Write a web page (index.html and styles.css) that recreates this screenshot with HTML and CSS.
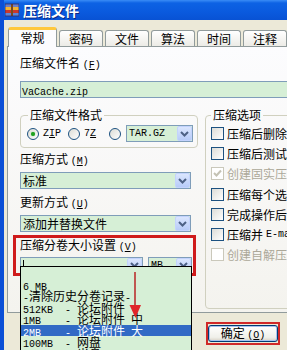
FILE: index.html
```html
<!DOCTYPE html>
<html lang="zh-CN">
<head>
    <meta charset="UTF-8">
    <title>压缩文件</title>
    <link rel="stylesheet" href="styles.css">
</head>
<body>
<div class="window">
    <div class="titlebar">
        <svg class="app-icon" width="14" height="14" viewBox="0 0 14 14">
            <rect x="0" y="1" width="14" height="3" fill="#6f7fc6"/>
            <rect x="0" y="4" width="14" height="3" fill="#f2b233"/>
            <rect x="0" y="7" width="14" height="3" fill="#c9392c"/>
            <rect x="0" y="10" width="14" height="3" fill="#5e86d6"/>
            <rect x="6" y="1" width="2" height="12" fill="#7a4a1e"/>
            <rect x="0" y="1" width="14" height="12" fill="none" stroke="#3a2a5a" stroke-width="0.8"/>
        </svg>
        <span class="title">压缩文件</span>
    </div>

    <div class="tabs">
        <div class="tab active">常规</div>
        <div class="tab">密码</div>
        <div class="tab">文件</div>
        <div class="tab">算法</div>
        <div class="tab">时间</div>
        <div class="tab">注释</div>
    </div>

    <div class="panel">
        <div class="label">压缩文件名 <span class="mono">(<u>F</u>)</span></div>
        <div class="textbox"><span class="mono">VaCache.zip</span></div>

        <div class="columns">
            <div class="left">
                <fieldset class="group format">
                    <legend>压缩文件格式</legend>
                    <div class="radios">
                        <span class="radio checked"></span>
                        <span class="mono radio-text">Z<u>I</u>P</span>
                        <span class="radio second"></span>
                        <span class="mono radio-text">7<u>Z</u></span>
                        <span class="radio third"></span>
                        <div class="combo tar">
                            <span class="mono combo-text">TAR.GZ</span>
                            <span class="drop"><svg width="9" height="6" viewBox="0 0 9 6"><polyline points="1,1 4.5,4.5 8,1" fill="none" stroke="#4d6185" stroke-width="2"/></svg></span>
                        </div>
                    </div>
                </fieldset>

                <div class="label gap-top">压缩方式 <span class="mono">(<u>M</u>)</span></div>
                <div class="combo">
                    <span class="combo-text">标准</span>
                    <span class="drop"><svg width="9" height="6" viewBox="0 0 9 6"><polyline points="1,1 4.5,4.5 8,1" fill="none" stroke="#4d6185" stroke-width="2"/></svg></span>
                </div>

                <div class="label gap-top wide-gap">更新方式 <span class="mono">(<u>U</u>)</span></div>
                <div class="combo">
                    <span class="combo-text">添加并替换文件</span>
                    <span class="drop"><svg width="9" height="6" viewBox="0 0 9 6"><polyline points="1,1 4.5,4.5 8,1" fill="none" stroke="#4d6185" stroke-width="2"/></svg></span>
                </div>

                <div class="volume">
                    <div class="label tight">压缩分卷大小设置 <span class="mono">(<u>V</u>)</span></div>
                    <div class="combo-row">
                        <div class="combo size">
                            <span class="caret"></span>
                            <span class="drop"><svg width="9" height="6" viewBox="0 0 9 6"><polyline points="1,1 4.5,4.5 8,1" fill="none" stroke="#4d6185" stroke-width="2"/></svg></span>
                        </div>
                        <div class="combo unit">
                            <span class="mono combo-text">MB</span>
                            <span class="drop"><svg width="9" height="6" viewBox="0 0 9 6"><polyline points="1,1 4.5,4.5 8,1" fill="none" stroke="#4d6185" stroke-width="2"/></svg></span>
                        </div>
                    </div>
                </div>
            </div>

            <fieldset class="group options">
                <legend>压缩选项</legend>
                <div class="check"><span class="box"></span>压缩后删除源文件</div>
                <div class="check"><span class="box"></span>压缩后测试压缩文件</div>
                <div class="check disabled"><span class="box"><svg width="11" height="11" viewBox="0 0 11 11"><polyline points="2,5 4.5,7.5 9,2.5" fill="none" stroke="#c4c2b4" stroke-width="2"/></svg></span>创建固实压缩文件</div>
                <div class="check"><span class="box"></span>压缩每个选中的文件到单独的压缩文件</div>
                <div class="check"><span class="box"></span>完成操作后关闭计算机</div>
                <div class="check"><span class="box"></span>压缩并<span class="mono">E-mail</span></div>
                <div class="check disabled"><span class="box"></span>创建自解压格式压缩文件</div>
            </fieldset>
        </div>
    </div>

    <div class="buttons">
        <div class="mark">
            <button class="btn">确定 <span class="mono">(<u>O</u>)</span></button>
        </div>
    </div>

    <!-- open list of the volume size combo -->
    <ul class="droplist">
        <li></li>
        <li><span class="mono">6 MB</span></li>
        <li><span class="mono">-</span>清除历史分卷记录<span class="mono">-</span></li>
        <li><span class="mono">512KB  - </span>论坛附件</li>
        <li><span class="mono">1MB    - </span>论坛附件<span class="mono"> </span>中</li>
        <li class="selected"><span class="mono">2MB    - </span>论坛附件<span class="mono"> </span>大</li>
        <li><span class="mono">100MB  - </span>网盘</li>
        <li><span class="mono">650MB  - </span>光盘</li>
    </ul>

    <svg class="arrow" width="14" height="50" viewBox="0 0 14 50">
        <line x1="6" y1="2" x2="6" y2="37" stroke="#b82424" stroke-width="1.5"/>
        <polygon points="0.5,35 12,35 6.5,48" fill="#e0262a"/>
    </svg>
</div>
</body>
</html>
```

FILE: styles.css
```css
* {
    box-sizing: border-box;
}

body {
    margin: 0;
    width: 287px;
    height: 350px;
    overflow: hidden;
    background-color: #ece9d8;
    font-family: "Noto Sans CJK SC", "Noto Sans", sans-serif;
    font-size: 12px;
    color: #000;
}

.mono {
    font-family: "Liberation Mono", monospace;
    font-size: 10px;
}

.window {
    position: relative;
    height: 350px;
    border-left: 4px solid #0b4fd6;
    background-color: #ece9d8;
}

/* title bar */
.titlebar {
    height: 20px;
    display: flex;
    align-items: center;
    gap: 4px;
    padding-left: 1px;
    background: linear-gradient(#3a8cf6 0, #0d62e4 3px, #0a5ade 60%, #0852d4 100%);
}

.title {
    color: #fff;
    font-weight: bold;
    font-size: 14px;
    line-height: 20px;
    text-shadow: 1px 1px #0a2a86;
}

/* tabs */
.tabs {
    display: flex;
    align-items: flex-end;
    height: 19px;
    margin-top: 7px;
    padding-left: 4px;
}

.tab {
    width: 44px;
    height: 16px;
    margin-left: 2px;
    border: 1px solid #919b9c;
    border-bottom: none;
    border-radius: 3px 3px 0 0;
    background: linear-gradient(#ffffff, #ecebe6);
    text-align: center;
    line-height: 15px;
}

.tab.active {
    position: relative;
    z-index: 1;
    width: 49px;
    height: 20px;
    margin-left: 0;
    margin-bottom: -1px;
    border-top: 3px solid #ffc83c;
    background: #fcfcfe;
    line-height: 16px;
}

/* tab page */
.panel {
    height: 267px;
    margin-left: 3px;
    padding: 9px 0 0 12px;
    border: 1px solid #919b9c;
    border-right: none;
    background: linear-gradient(#fcfcfe, #f4f3ee);
}

.label {
    line-height: 14px;
    white-space: nowrap;
}

.label.gap-top {
    margin-top: 4px;
}

.label.wide-gap {
    margin-top: 6px;
}

.label.tight {
    line-height: 13px;
}

.textbox {
    width: 280px;
    height: 17px;
    margin-top: 8px;
    padding-left: 1px;
    border: 1px solid #7f9db9;
    background: #d6efd6;
    line-height: 15px;
}

.columns {
    display: flex;
    margin-top: 10px;
}

.left {
    width: 178px;
    flex-shrink: 0;
}

.group {
    margin: 0;
    border: 1px solid #d0d0bf;
    border-radius: 4px;
    min-width: 0;
}

.group legend {
    padding: 0 2px;
    line-height: 14px;
}

.format {
    padding: 3px 0 5px 6px;
}

.format legend {
    margin-left: 1px;
}

.radios {
    display: flex;
    align-items: center;
    height: 17px;
}

.radio {
    width: 12px;
    height: 12px;
    border: 1px solid #1c5180;
    border-radius: 50%;
    background: linear-gradient(135deg, #dcdcd5, #ffffff);
    display: flex;
    align-items: center;
    justify-content: center;
}

.radio.checked::after {
    content: "";
    width: 4px;
    height: 4px;
    border-radius: 50%;
    background: #21a121;
    box-shadow: 0 0 1px #4dc44d;
}

.radio-text {
    margin-left: 4px;
}

.radio.second {
    margin-left: 7px;
}

.radio.third {
    margin-left: 13px;
}

/* combo boxes */
.combo {
    display: flex;
    align-items: center;
    width: 171px;
    height: 17px;
    margin-top: 3px;
    border: 1px solid #7f9db9;
    background: #d6efd6;
}

.combo-text {
    padding-left: 2px;
    line-height: 15px;
    white-space: nowrap;
}

.drop {
    margin-left: auto;
    width: 15px;
    height: 100%;
    border: 1px solid #c3d3fd;
    border-radius: 2px;
    background: linear-gradient(#dbe6fe, #b7cbf8);
    display: flex;
    align-items: center;
    justify-content: center;
}

.combo.tar {
    width: 67px;
    margin-top: 0;
    margin-left: 5px;
}

.volume {
    margin: 3px 2px 0 -7px;
    padding: 0 1px 0 4px;
    border: 3px solid #cf1b1b;
}

.combo-row {
    display: flex;
    gap: 5px;
    margin-top: 3px;
}

.combo.size {
    width: 123px;
    height: 16px;
    margin-top: 0;
}

.combo.unit {
    flex: 1;
    width: auto;
    height: 16px;
    margin-top: 0;
}

.caret {
    width: 1px;
    height: 11px;
    margin-left: 2px;
    background: #000;
}

/* options group */
.options {
    width: 120px;
    height: 201px;
    margin-left: 7px;
    padding: 1px 0 0 5px;
    flex-shrink: 0;
}

.check {
    display: flex;
    align-items: center;
    gap: 3px;
    height: 20.3px;
    white-space: nowrap;
}

.box {
    width: 13px;
    height: 13px;
    flex-shrink: 0;
    border: 1px solid #1c5180;
    background: linear-gradient(135deg, #dcdcd7, #ffffff);
    display: flex;
    align-items: center;
    justify-content: center;
}

.check.disabled {
    color: #aca899;
}

.check.disabled .box {
    border-color: #cac8bb;
    background: #fff;
}

/* bottom buttons */
.buttons {
    display: flex;
    justify-content: flex-end;
    margin-top: 9px;
    padding-right: 7px;
}

.mark {
    display: flex;
    padding: 1px 0;
    border: 2px solid #d02828;
}

.btn {
    width: 70px;
    height: 17px;
    padding: 0;
    border: 1px solid #003c74;
    border-radius: 3px;
    background: linear-gradient(#ffffff, #f0f0ea 75%, #d8d2c6);
    box-shadow: inset 0 0 0 1px #a9c1ee;
    font-family: "Noto Sans CJK SC", sans-serif;
    font-size: 12px;
    line-height: 14px;
    color: #000;
}

/* open drop-down list */
.droplist {
    position: absolute;
    left: 16px;
    top: 266px;
    width: 172px;
    height: 100px;
    margin: 0;
    padding: 0;
    list-style: none;
    border: 1px solid #000;
    background: #d6efd6;
}

.droplist li {
    height: 11.5px;
    padding-left: 2px;
    line-height: 11.5px;
    white-space: pre;
}

.droplist li.selected {
    background: #316ac5;
    color: #fff;
}

.arrow {
    position: absolute;
    left: 125px;
    top: 270px;
}
```
